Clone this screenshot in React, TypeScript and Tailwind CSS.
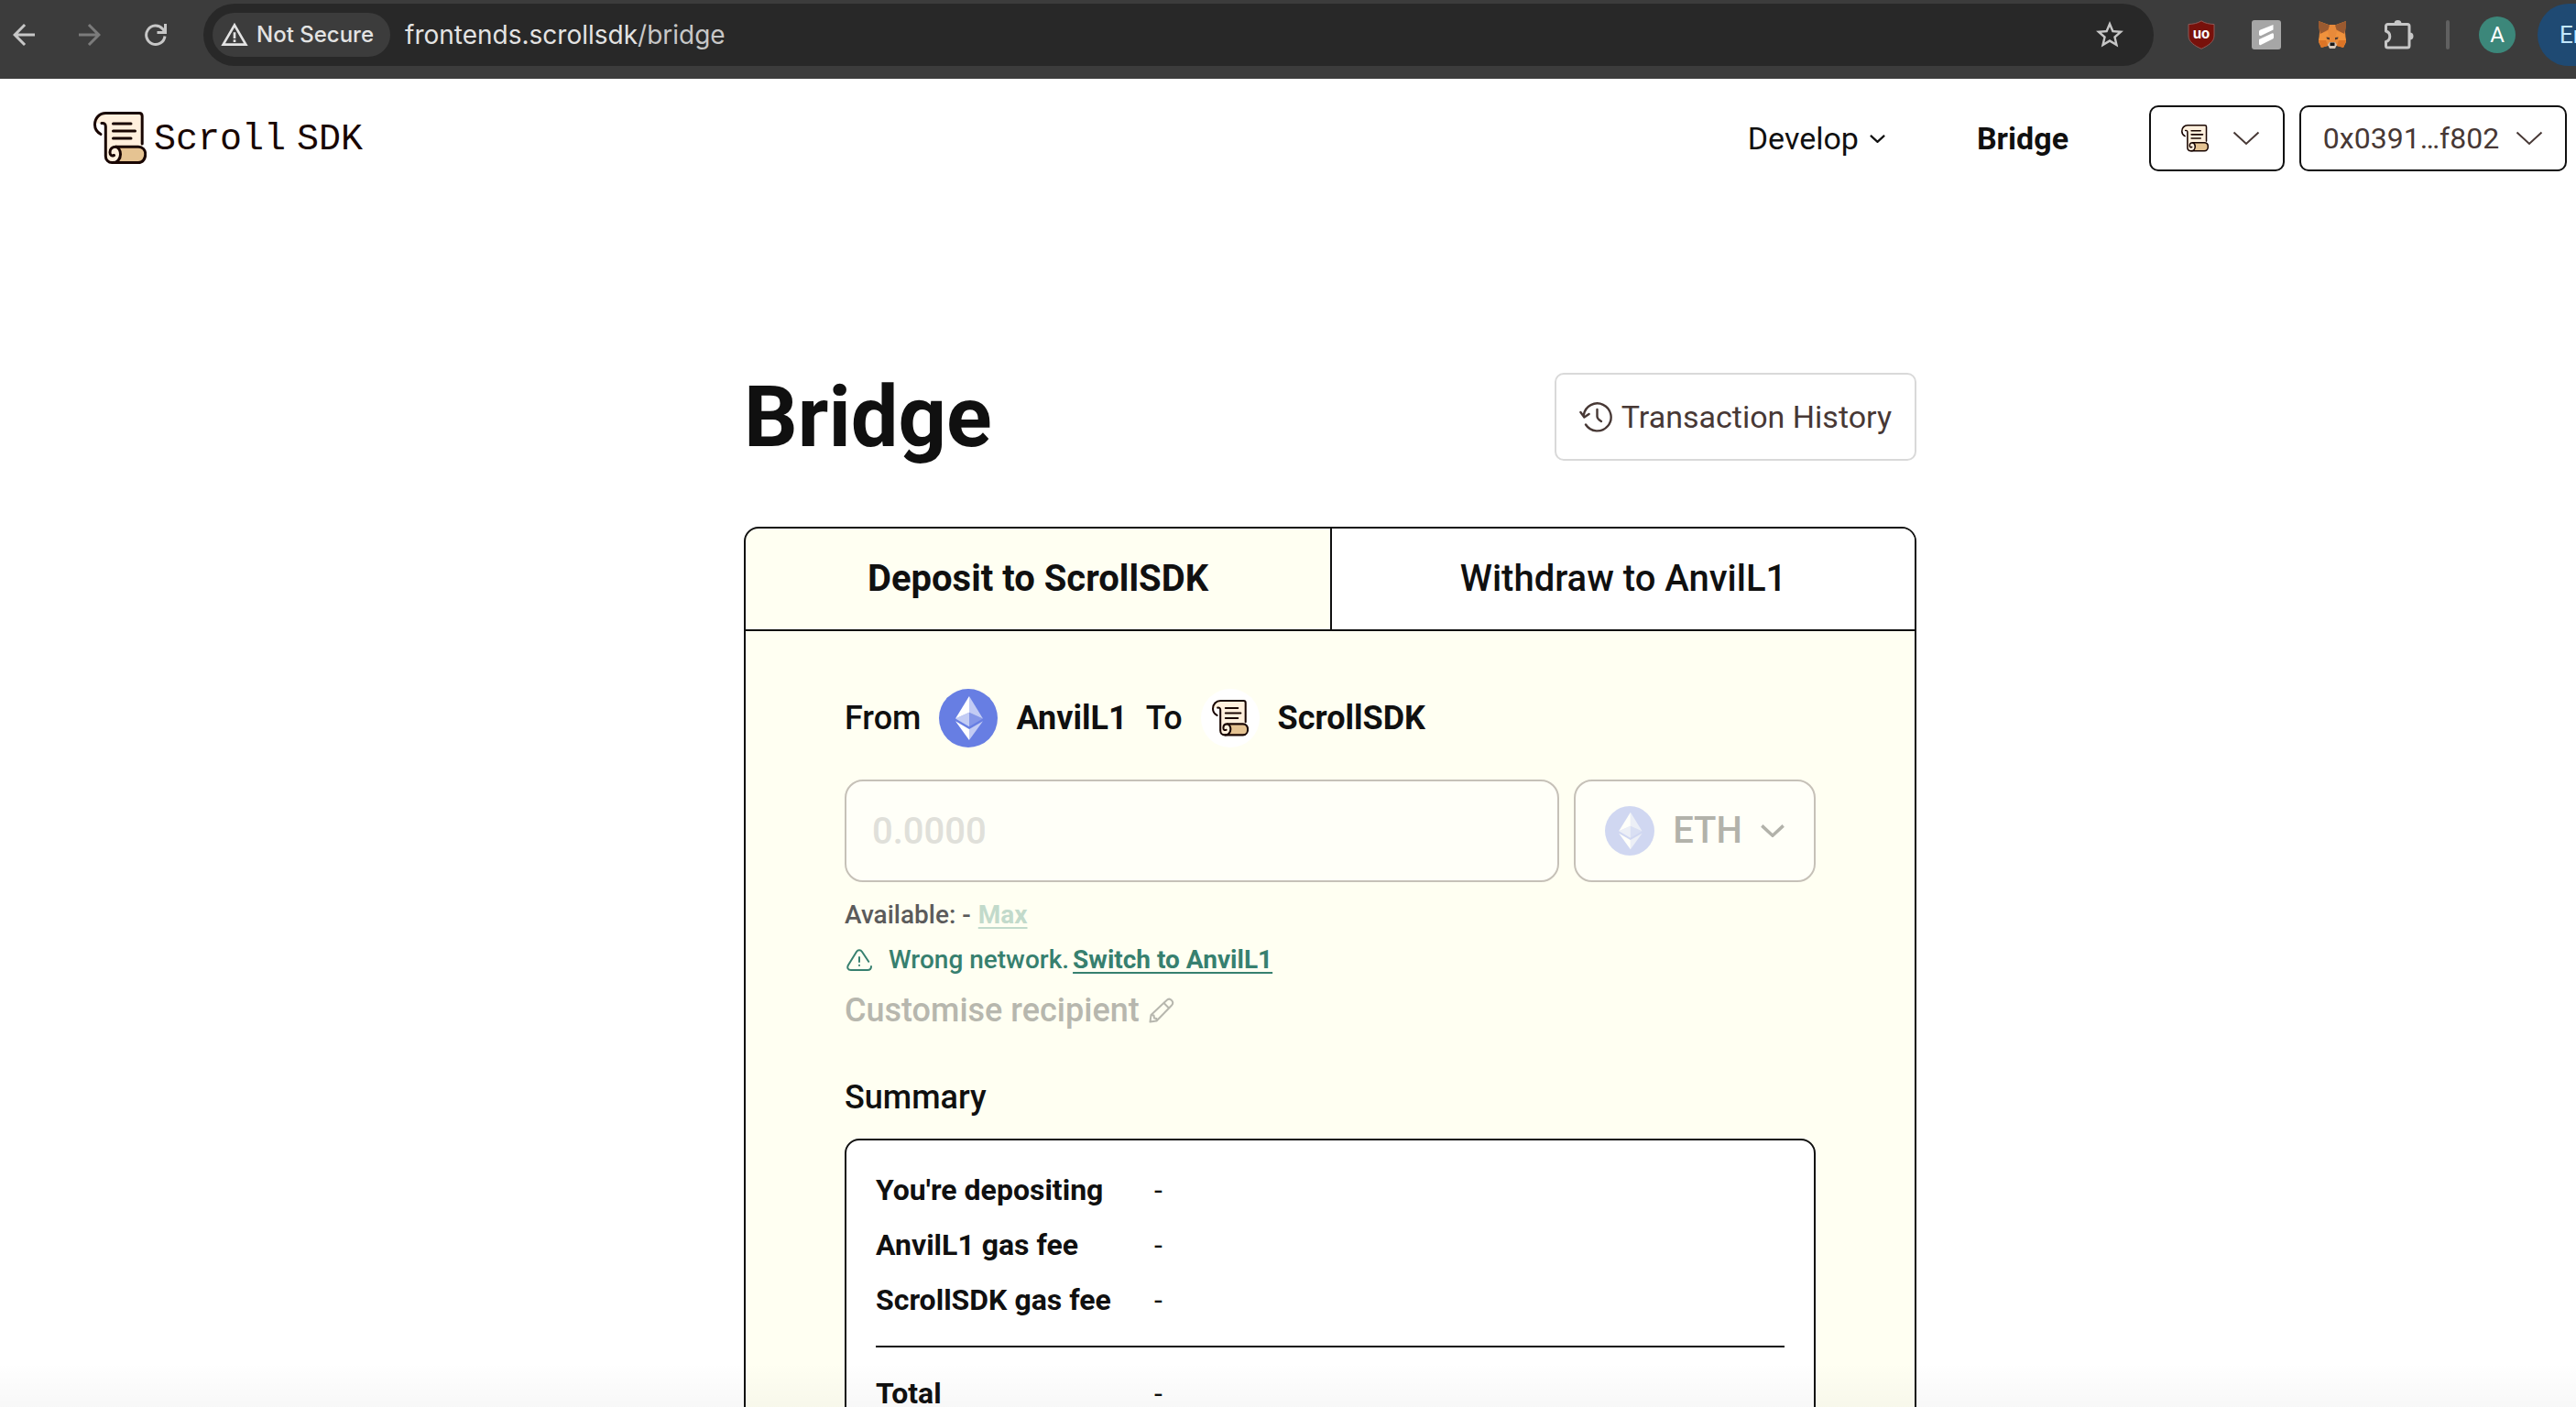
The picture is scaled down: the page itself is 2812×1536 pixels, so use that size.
import { useState } from 'react';
import { MdArrowBack, MdArrowForward, MdStarBorder, MdWarningAmber } from 'react-icons/md';

function ScrollIcon({ className }: { className: string }) {
  return (
    <svg viewBox="0 0 58 58" className={className} fill="none" strokeLinecap="round" strokeLinejoin="round" aria-hidden="true">
      <path d="M13.2 15v33c0 4 3 7.600 7 7.600L28 50V38h25V4.500c0-2-1-3.200-3-3.200H13C6 1.300 1.500 7 1.500 13L9 12.500c2.500 0 4.200 1 4.200 2.500Z" fill="#FFF0DD" />
      <path d="M26 38h24c4 0 6.700 4 6.700 8.500S53 55.600 49 55.600H20c5 0 9-4 9-9.600 0-3-1-6-3-8Z" fill="#E5C392" />
      <g stroke="#190602" strokeWidth="3">
        <path d="M8 24.500C3.500 22 1.500 18 1.500 14 1.500 7 6.500 1.500 13.500 1.500H50c2 0 3.200 1.200 3.200 3.200V35" />
        <path d="M9 12.500c2.800-.4 4.300.8 4.300 3.500v32.500c0 4 3 7.100 7 7.100H49c4.500 0 7.700-4 7.700-9s-3.200-8.400-7.700-8.400H24.500c-4 0-6.500 2.500-6.500 6s2 4.300 4.500 3.300" />
        <path d="M24.500 38.200c3.500 1.500 5 4.500 5 8.300 0 5-3.500 9.100-8.500 9.100" />
        <path d="M21.500 13H41M21.500 21h24M21.500 29H41" />
      </g>
    </svg>
  );
}

function EthIcon({ className }: { className: string }) {
  return (
    <svg viewBox="0 0 32 32" className={className} aria-hidden="true">
      <circle cx="16" cy="16" r="16" fill="#677EE3" />
      <g fill="#fff">
        <path fillOpacity=".602" d="M16.498 4v8.870l7.497 3.350z" />
        <path d="M16.498 4L9 16.220l7.498-3.350z" />
        <path fillOpacity=".602" d="M16.498 21.968v6.027L24 17.616z" />
        <path d="M16.498 27.995v-6.028L9 17.616z" />
        <path fillOpacity=".2" d="M16.498 20.573l7.497-4.353-7.497-3.348z" />
        <path fillOpacity=".602" d="M9 16.220l7.498 4.353v-7.701z" />
      </g>
    </svg>
  );
}

function Chevron({ className, weight }: { className: string; weight: number }) {
  return (
    <svg viewBox="0 0 30 16" className={className} fill="none" stroke="currentColor" strokeWidth={weight} aria-hidden="true">
      <path d="M1.500 1.500L15 14 28.500 1.500" />
    </svg>
  );
}

function ReloadIcon() {
  return (
    <svg viewBox="0 0 24 26" className="h-[26px] w-6" fill="none" stroke="#C7C7C7" strokeWidth="3" aria-hidden="true">
      <path d="M22 14.500A10.200 10.200 0 1 1 19.500 6.500L22 9.500" />
      <path d="M22.500 1v9.500H13.500" />
    </svg>
  );
}

function PuzzleIcon() {
  return (
    <svg viewBox="0 0 34 34" className="size-[34px]" aria-hidden="true">
      <path d="M4.500 5.500H26a2 2 0 0 1 2 2V29a2 2 0 0 1-2 2H4.500a2 2 0 0 1-2-2v-4.500a6 6 0 0 0 0-11.500V7.500a2 2 0 0 1 2-2Z" fill="none" stroke="#C7C7C7" strokeWidth="3" strokeLinejoin="round" />
      <path d="M11.500 5a4 4 0 0 1 8 0ZM28.500 14.500a4 4 0 0 1 0 8Z" fill="#C7C7C7" />
    </svg>
  );
}

function ShieldIcon() {
  return (
    <svg viewBox="0 0 30 32" className="h-8 w-[30px]" aria-hidden="true">
      <path d="M15 .8C11 3.500 6 4.300 1 4.500V17c0 7 7 11 14 14.300C22 28 29 24 29 17V4.500C24 4.300 19 3.500 15 .8Z" fill="#78110B" stroke="#8d5a57" strokeWidth="1" />
      <text x="15" y="19.500" textAnchor="middle" fill="#fff" fontSize="15" fontWeight="700" fontFamily="Inter, sans-serif">uo</text>
    </svg>
  );
}

function SlashesIcon() {
  return (
    <svg viewBox="0 0 32 32" className="size-8" aria-hidden="true">
      <rect width="32" height="32" rx="3" fill="#A6A6A6" />
      <path d="M8 12.500a2 2 0 0 1 1-1.700L23.500 5v5.500L10 17a1.500 1.500 0 0 1-2-1.500ZM24 15.500a1.500 1.500 0 0 0-2-1L8 21v5a1.500 1.500 0 0 0 2 1l13-6.500a2 2 0 0 0 1-2Z" fill="#fff" />
    </svg>
  );
}

function FoxIcon() {
  return (
    <svg viewBox="0 0 32 30" className="h-[30px] w-8" aria-hidden="true">
      <path d="M1 0l11 4h8l11-4-1 12 1 11-3 6-7-2H11l-7 2-3-6 1-11Z" fill="#E88A3A" />
      <path d="M1 0l12 4.500-1.500 5L3 14 1 6ZM31 0L19 4.500l1.500 5L29 14l2-8Z" fill="#9A5A30" />
      <path d="M11 11l-8 3-2 7h8l4-1ZM21 11l8 3 2 7h-8l-4-1Z" fill="#F0923C" />
      <path d="M1 21h8l2 6-7 2ZM31 21h-8l-2 6 7 2Z" fill="#DC7426" />
      <path d="M9.500 17.500l3.500.5v2.500l-3-1ZM22.500 17.500L19 18v2.500l3-1Z" fill="#4D3B35" />
      <path d="M11 26l2-3h6l2 3-2 4h-6Z" fill="#D5C4B5" />
      <path d="M13.500 23.500h5V27h-5Z" fill="#181818" />
    </svg>
  );
}

function HistoryIcon() {
  return (
    <svg viewBox="0 0 36 34" className="h-[34px] w-9" fill="none" stroke="#473835" strokeWidth="2.400" strokeLinecap="round" strokeLinejoin="round" aria-hidden="true">
      <path d="M4.800 15A15 15 0 1 1 7 25.500" />
      <path d="M1.400 12l4 5.500 5.200-3.500" />
      <path d="M19.500 9v7.500c0 1.500 2 4 4.500 5.500" />
    </svg>
  );
}

function AlertIcon() {
  return (
    <svg viewBox="0 0 28 24" className="h-6 w-7" fill="none" stroke="#37806F" strokeWidth="2" strokeLinecap="round" strokeLinejoin="round" aria-hidden="true">
      <path d="M24.200 13.800L17 3c-1.500-2.300-4.500-2.300-6 0L2 17.500C.4 20.500 1.500 23 5 23h18c2.500 0 4-1.300 4-4" />
      <path d="M14 9v5M14 17.800v.2" />
    </svg>
  );
}

function PencilIcon() {
  return (
    <svg viewBox="0 0 28 28" className="size-7" fill="none" stroke="currentColor" strokeWidth="2" strokeLinejoin="round" aria-hidden="true">
      <path d="M1.500 26.500l1-7.500L19.500 3c3.500-3.500 9 1.500 5.500 5.500L8.500 25.500Z" />
      <path d="M16.500 6l5.500 5.500M2.500 19l3 .5.500 3 2.500.5v2.500" />
    </svg>
  );
}

function BrowserBar() {
  return (
    <div className="flex h-[86px] items-start bg-[#3C3C3C] pt-1 font-[Inter,sans-serif]">
      <div className="flex h-[68px] items-center gap-9 pl-2 text-[#C7C7C7]">
        <button aria-label="Back"><MdArrowBack size={36} /></button>
        <button aria-label="Forward" className="text-[#7B7B7B]"><MdArrowForward size={36} /></button>
        <button aria-label="Reload" className="px-[6px]"><ReloadIcon /></button>
      </div>
      <div className="ml-[34px] flex h-[68px] flex-1 items-center rounded-full bg-[#282828] pr-[30px] pl-[10px]">
        <button className="flex h-12 items-center gap-2 rounded-full bg-[#3C3C3C] pr-[18px] pl-2 text-2xl font-medium whitespace-nowrap text-[#E3E3E3]">
          <MdWarningAmber size={32} />
          Not Secure
        </button>
        <div className="ml-4 flex-1 text-[28px] whitespace-nowrap text-[#E3E3E3]">
          frontends.scrollsdk<span className="text-[#C7C7C7]">/bridge</span>
        </div>
        <button aria-label="Bookmark" className="text-[#C7C7C7]"><MdStarBorder size={36} /></button>
      </div>
      <div className="flex h-[68px] items-center pl-[37px]">
        <div className="flex items-center gap-10">
          <button aria-label="Ad blocker"><ShieldIcon /></button>
          <button aria-label="Extension"><SlashesIcon /></button>
          <button aria-label="Wallet"><FoxIcon /></button>
          <button aria-label="Extensions"><PuzzleIcon /></button>
        </div>
        <div className="ml-[34px] h-8 w-1 rounded-full bg-[#606060]" />
        <button className="ml-8 flex size-10 items-center justify-center rounded-full bg-[#3C877A] font-[Roboto,sans-serif] text-2xl text-white">A</button>
        <button className="ml-6 flex h-[68px] w-[42px] items-center overflow-hidden rounded-l-full bg-[#1F4A73] pl-6 font-[Roboto,sans-serif] text-[26px] text-[#C2E7FF]">Er</button>
      </div>
    </div>
  );
}

function SiteHeader() {
  return (
    <header className="flex items-center pt-[29px] pr-[10px] pl-[102px]">
      <a href="#home" className="flex items-center gap-2 text-[#190602]">
        <ScrollIcon className="size-[58px]" />
        <span className="flex gap-3 pt-1 font-['Liberation_Mono',monospace] text-[40px]">
          <span>Scroll</span>
          <span>SDK</span>
        </span>
      </a>
      <nav className="ml-auto flex items-center text-[34px] text-[#101010]">
        <button className="flex items-center gap-3">
          Develop
          <Chevron className="h-[9px] w-[17px]" weight={4} />
        </button>
        <a href="#bridge" className="mr-[88px] ml-[100px] font-bold">Bridge</a>
      </nav>
      <button aria-label="Network" className="flex h-[72px] w-[148px] items-center justify-center gap-[26px] rounded-[10px] border-2 border-[#101010] pl-2 text-[#473835]">
        <ScrollIcon className="size-[30px]" />
        <Chevron className="h-4 w-[30px]" weight={2} />
      </button>
      <button className="ml-4 flex h-[72px] w-[292px] items-center justify-center gap-[18px] rounded-[10px] border-2 border-[#101010] text-[32px] text-[#473835]">
        0x0391…f802
        <Chevron className="h-4 w-[30px]" weight={2} />
      </button>
    </header>
  );
}

const fees = ["You're depositing", 'AnvilL1 gas fee', 'ScrollSDK gas fee'];

function SummaryRow({ label }: { label: string }) {
  return (
    <div className="flex h-[60px] items-center text-[32px]">
      <dt className="w-[304px] font-bold">{label}</dt>
      <dd>-</dd>
    </div>
  );
}

export default function App() {
  const [amount, setAmount] = useState('');
  return (
    <div className="relative h-screen overflow-hidden bg-white font-[Roboto,sans-serif] text-[#101010]">
      <BrowserBar />
      <SiteHeader />
      <main className="pt-[220px] pl-[92px]">
        <div className="mx-auto w-full max-w-[1280px]">
          <div className="flex h-24 items-center justify-between">
            <h1 className="pt-[2px] text-[92px] leading-none font-bold">Bridge</h1>
            <button className="flex h-24 items-center gap-[10px] rounded-[10px] border-2 border-[#D9D9D9] px-[25px] text-[34px] text-[#473835]">
              <HistoryIcon />
              Transaction History
            </button>
          </div>
          <section className="mt-[72px] overflow-hidden rounded-t-2xl border-2 border-[#101010] bg-[#FFFFF2]">
            <div className="grid h-28 grid-cols-2 border-b-2 border-[#101010] text-[40px]">
              <button className="font-bold">Deposit to ScrollSDK</button>
              <button className="border-l-2 border-[#101010] bg-white font-medium">Withdraw to AnvilL1</button>
            </div>
            <div className="px-[108px] pt-[63px] pb-16">
              <div className="flex h-16 items-center gap-5 text-[36px] font-medium">
                From
                <EthIcon className="size-16" />
                <strong className="font-bold">AnvilL1</strong>
                To
                <span className="flex size-16 items-center justify-center rounded-full bg-white">
                  <ScrollIcon className="size-10" />
                </span>
                <strong className="font-bold">ScrollSDK</strong>
              </div>
              <div className="mt-[35px] flex gap-4">
                <input
                  aria-label="Amount"
                  placeholder="0.0000"
                  value={amount}
                  onChange={(e) => setAmount(e.target.value)}
                  className="h-28 min-w-0 flex-1 rounded-[20px] border-2 border-[#C6C1B8] bg-[#FFFFF8] px-7 text-[40px] font-medium placeholder:text-[#E0E0DA]"
                />
                <button className="flex h-28 w-[264px] items-center justify-center rounded-[20px] border-2 border-[#C6C1B8] bg-[#FFFFF8] text-[40px] font-medium text-[#B2B2AA]">
                  <EthIcon className="mr-5 size-[54px] opacity-30" />
                  ETH
                  <Chevron className="ml-5 h-[14px] w-[26px]" weight={4} />
                </button>
              </div>
              <div className="mt-3 flex h-12 items-center gap-2 text-[28px] font-medium text-[#5B5B5B]">
                Available: -
                <button className="font-bold text-[#C2DACB] underline decoration-2 underline-offset-4">Max</button>
              </div>
              <div className="flex h-[50px] items-center text-[28px] font-medium text-[#37806F]">
                <span className="mr-[18px] ml-[2px]"><AlertIcon /></span>
                Wrong network.
                <button className="ml-1 font-bold underline decoration-2 underline-offset-4">Switch to AnvilL1</button>
              </div>
              <button className="flex h-[60px] items-center gap-[10px] text-[36px] font-medium text-[#B7B7AE]">
                Customise recipient
                <PencilIcon />
              </button>
              <h2 className="mt-[41px] h-12 text-[36px] leading-[48px] font-medium">Summary</h2>
              <dl className="mt-[21px] rounded-2xl border-2 border-[#101010] bg-white px-8 py-6">
                {fees.map((label) => <SummaryRow key={label} label={label} />)}
                <div className="my-5 h-[2px] bg-[#101010]" />
                <SummaryRow label="Total" />
              </dl>
            </div>
          </section>
        </div>
      </main>
      <div className="pointer-events-none absolute inset-x-0 bottom-0 h-12 bg-linear-to-b from-transparent to-black/3" />
    </div>
  );
}
